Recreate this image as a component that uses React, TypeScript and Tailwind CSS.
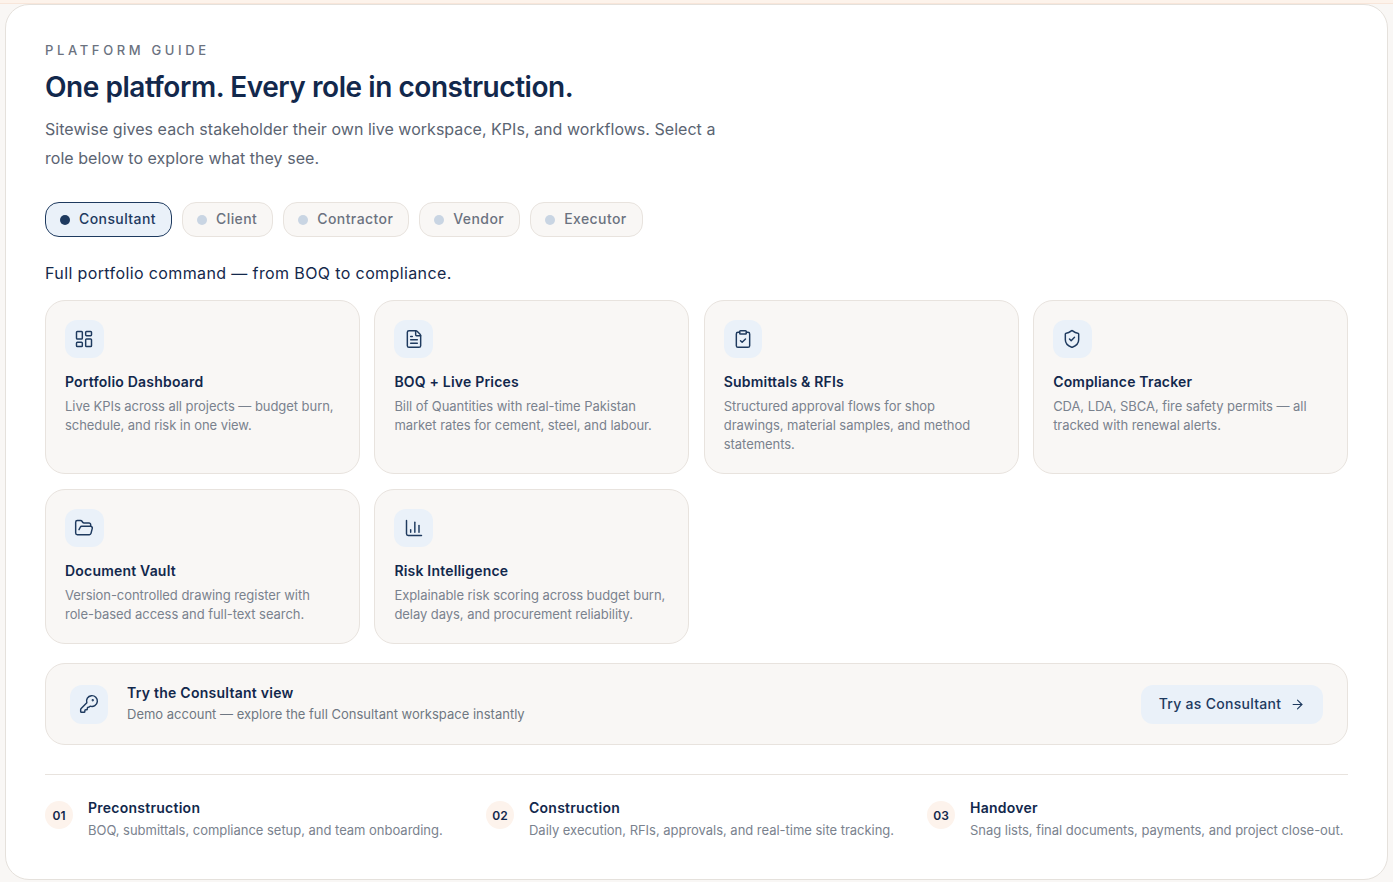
import { LayoutDashboard, FileText, ClipboardCheck, ShieldCheck, FolderOpen, ChartColumn, KeyRound, ArrowRight } from "lucide-react";

const roles = ["Consultant", "Client", "Contractor", "Vendor", "Executor"];
const features = [
  { icon: LayoutDashboard, title: "Portfolio Dashboard", text: "Live KPIs across all projects — budget burn,\nschedule, and risk in one view." },
  { icon: FileText, title: "BOQ + Live Prices", text: "Bill of Quantities with real-time Pakistan\nmarket rates for cement, steel, and labour." },
  { icon: ClipboardCheck, title: "Submittals & RFIs", text: "Structured approval flows for shop\ndrawings, material samples, and method\nstatements." },
  { icon: ShieldCheck, title: "Compliance Tracker", text: "CDA, LDA, SBCA, fire safety permits — all\ntracked with renewal alerts." },
  { icon: FolderOpen, title: "Document Vault", text: "Version-controlled drawing register with\nrole-based access and full-text search." },
  { icon: ChartColumn, title: "Risk Intelligence", text: "Explainable risk scoring across budget burn,\ndelay days, and procurement reliability." },
];
const steps = [
  { n: "01", title: "Preconstruction", text: "BOQ, submittals, compliance setup, and team onboarding." },
  { n: "02", title: "Construction", text: "Daily execution, RFIs, approvals, and real-time site tracking." },
  { n: "03", title: "Handover", text: "Snag lists, final documents, payments, and project close-out." },
];

export default function App() {
  return (
    <div className="h-[882px] overflow-hidden bg-[#f9f7f5] font-['Inter',sans-serif] text-[#14284b]">
      <div className="h-[4px] border-b border-[#f8e6da] bg-[#fdf3eb]" />
      <div className="mx-[5px] h-[876px] rounded-[24px] border border-[#e5e1dc] bg-white px-[39px] pt-[35px]">
        <div className="text-[13px] font-medium leading-[20px] tracking-[0.28em] text-[#6b7280]">PLATFORM GUIDE</div>
        <h1 className="mt-[9px] text-[28px] font-semibold leading-[36px] tracking-[-0.016em] text-[#12284c]">One platform. Every role in construction.</h1>
        <p className="mt-[10px] w-[700px] text-[16px] leading-[29px] tracking-[0.002em] text-[#5b6472]">
          Sitewise gives each stakeholder their own live workspace, KPIs, and workflows. Select a<br />role below to explore what they see.
        </p>
        <div className="mt-[29px] flex gap-[10px]">
          {roles.map((r, i) => (
            <div
              key={r}
              className={
                i === 0
                  ? "flex h-[35px] items-center gap-[9px] rounded-[14px] border border-[#1e3a5f] bg-[#eaf1f9] pl-[14px] pr-[15px] text-[14px] font-medium tracking-[0.03em] text-[#1e3a5f]"
                  : "flex h-[35px] items-center gap-[9px] rounded-[14px] border border-[#e8e3de] bg-[#f9f7f5] pl-[14px] pr-[15px] text-[14px] font-medium tracking-[0.03em] text-[#6b7280]"
              }
            >
              <span className={i === 0 ? "h-[10px] w-[10px] rounded-full bg-[#1e3a5f]" : "h-[10px] w-[10px] rounded-full bg-[#c9d5e3]"} />
              <span className="-mt-[2px]">{r}</span>
            </div>
          ))}
        </div>
        <p className="mt-[24px] text-[16px] font-normal leading-[24px] tracking-[0.024em] text-[#14284b]">Full portfolio command — from BOQ to compliance.</p>
        <div className="mt-[15px] grid grid-cols-4 gap-[14.5px]">
          {features.map((f, i) => {
            const Icon = f.icon;
            return (
              <div key={f.title} className={i < 4 ? "h-[174px] rounded-[20px] border border-[#e8e3de] bg-[#f9f7f5] px-[19px] pt-[19px]" : "h-[155px] rounded-[20px] border border-[#e8e3de] bg-[#f9f7f5] px-[19px] pt-[19px]"}>
                <div className="flex h-[38px] w-[38.5px] items-center justify-center rounded-[12px] bg-[#eaf1f9]">
                  <Icon size={20} strokeWidth={1.75} className="text-[#1e3a5f]" />
                </div>
                <div className="mt-[13px] text-[14px] font-semibold leading-[22px] tracking-[0.014em] text-[#12284c]">{f.title}</div>
                <p className="mt-[4px] whitespace-pre-line text-[13px] leading-[19px] tracking-[-0.004em] text-[#7a828e]">{f.text}</p>
              </div>
            );
          })}
        </div>
        <div className="mt-[19px] flex h-[82px] items-center justify-between rounded-[20px] border border-[#e8e3de] bg-[#f9f7f5] pl-[24px] pr-[24px] pt-[1px]">
          <div className="flex items-center gap-[19px]">
            <div className="flex h-[39px] w-[38px] items-center justify-center rounded-[12px] bg-[#eaf1f9]">
              <KeyRound size={20} strokeWidth={1.75} className="text-[#1e3a5f]" />
            </div>
            <div className="-mt-px">
              <div className="text-[14px] font-semibold leading-[20px] tracking-[0.018em] text-[#12284c]">Try the Consultant view</div>
              <div className="mt-[1px] text-[13px] leading-[20px] text-[#6f7782]">Demo account — explore the full Consultant workspace instantly</div>
            </div>
          </div>
          <div className="flex h-[39px] w-[182px] items-center justify-center gap-[9px] rounded-[12px] bg-[#eaf1f9] text-[14px] font-medium tracking-[0.02em] text-[#1e3a5f]">
            <span className="-mt-[2px]">Try as Consultant</span> <ArrowRight size={15} strokeWidth={1.75} />
          </div>
        </div>
        <div className="mt-[29px] grid grid-cols-[441px_441px_1fr] border-t border-[#e8e3de] pt-[22px]">
          {steps.map((s) => (
            <div key={s.n} className="flex gap-[15px]">
              <div className="mt-[4px] flex h-[28px] w-[28px] shrink-0 items-center justify-center rounded-full bg-[#fdf3ec] pt-[2px] text-[12px] font-semibold text-[#12284c]">{s.n}</div>
              <div>
                <div className="text-[14px] font-semibold leading-[22px] tracking-[0.018em] text-[#12284c]">{s.title}</div>
                <div className="whitespace-nowrap text-[13px] leading-[22px] tracking-[-0.002em] text-[#7a828e]">{s.text}</div>
              </div>
            </div>
          ))}
        </div>
      </div>
    </div>
  );
}
